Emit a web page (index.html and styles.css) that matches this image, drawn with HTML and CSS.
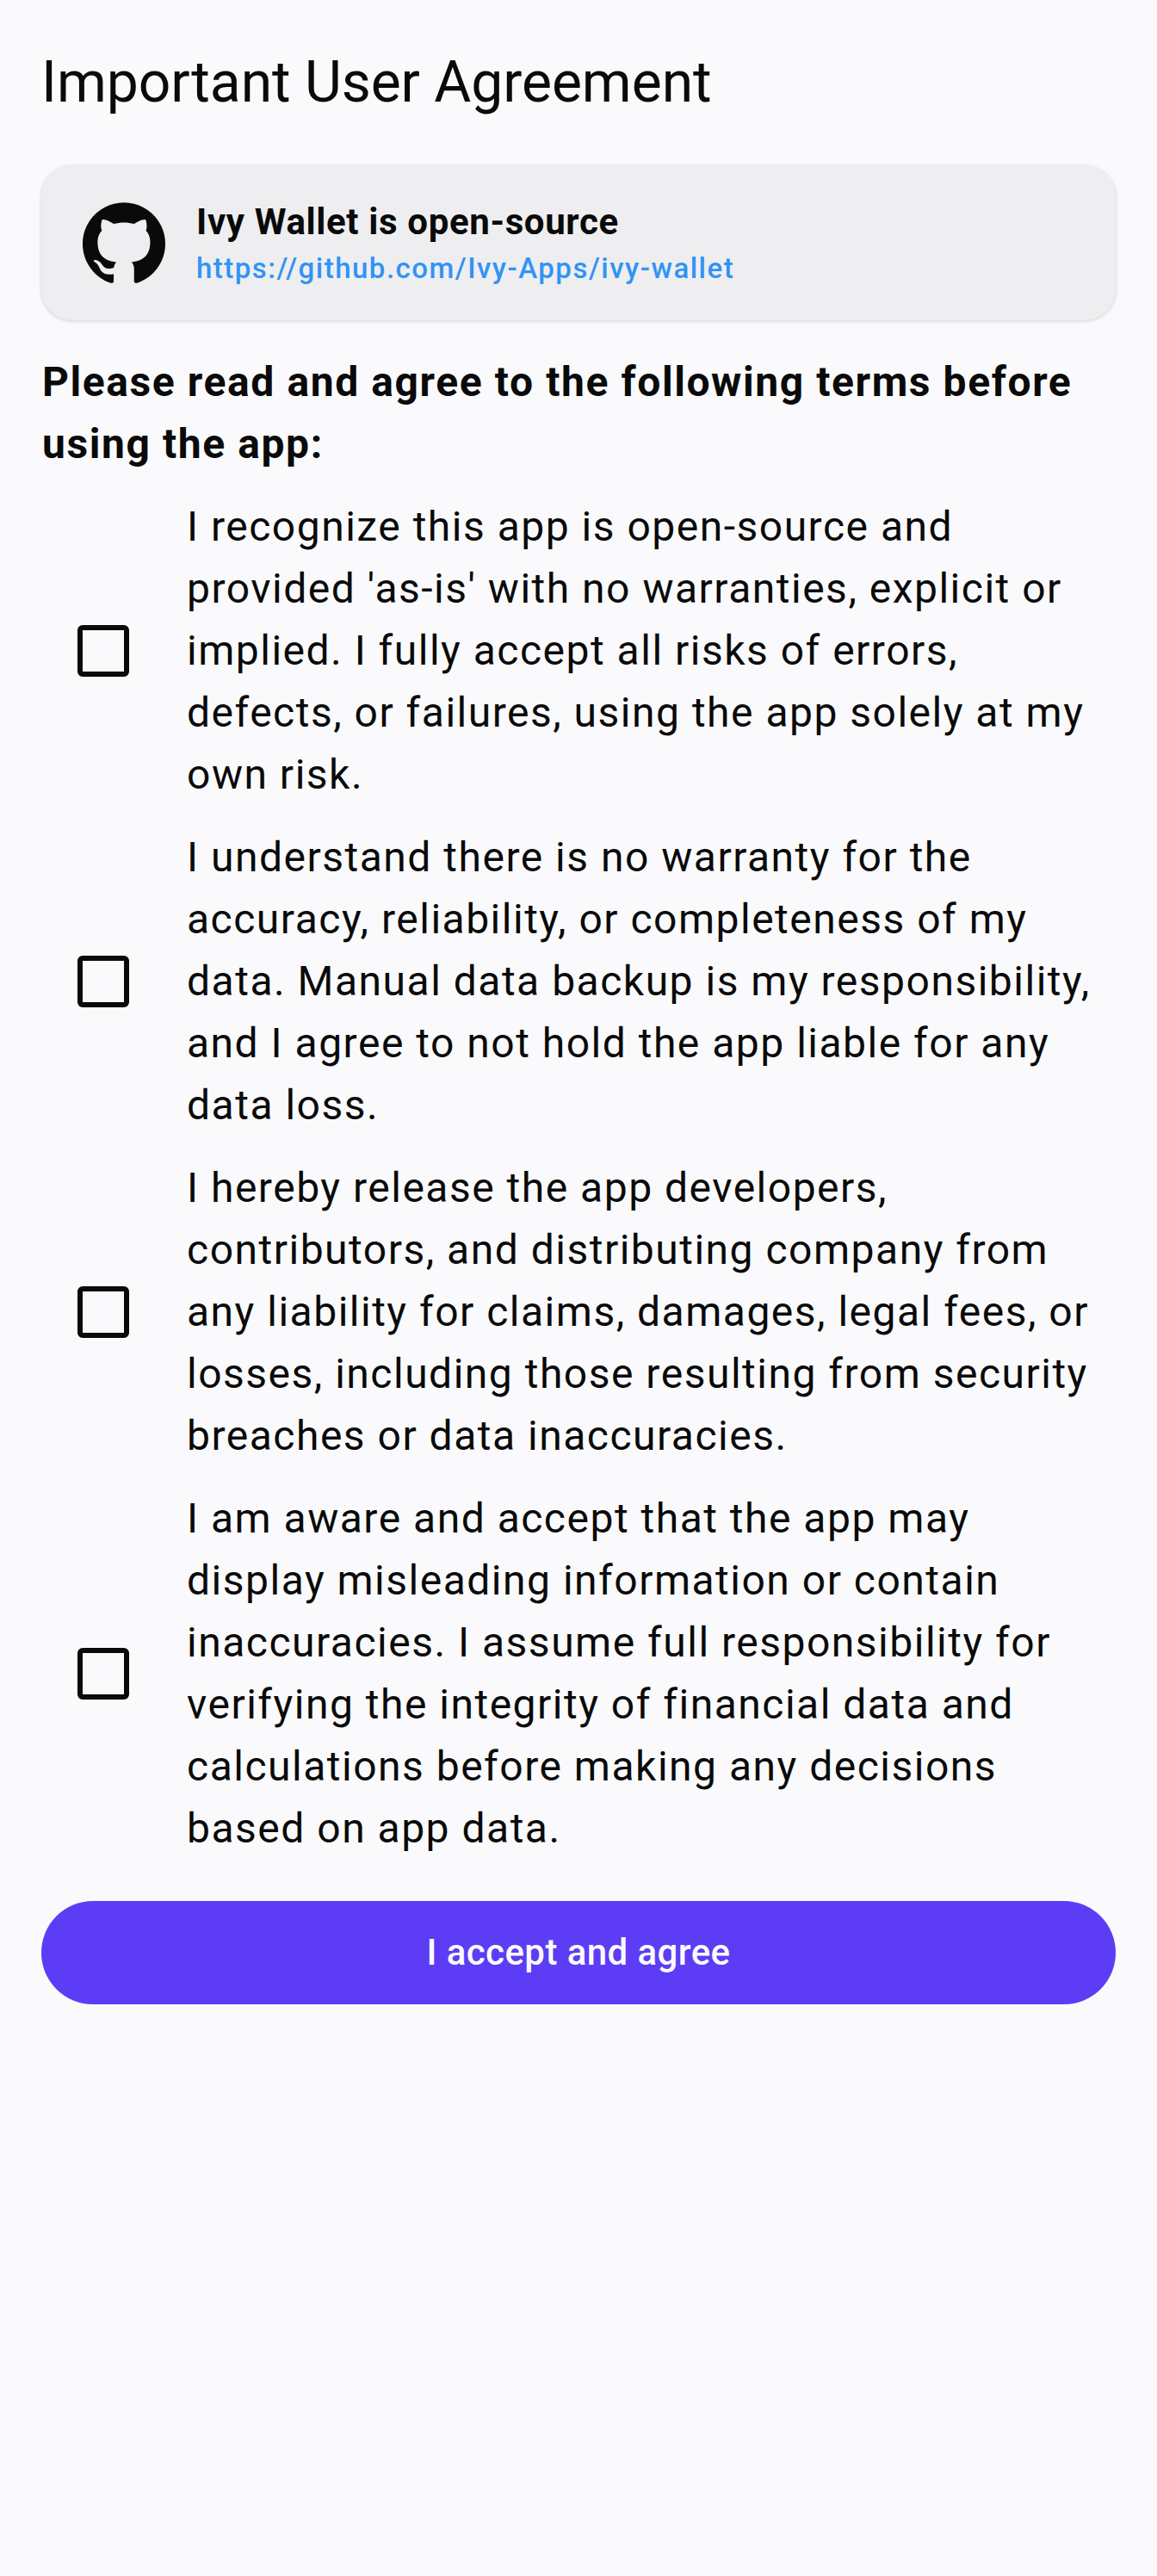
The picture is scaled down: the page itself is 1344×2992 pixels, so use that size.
FILE: index.html
```html
<!DOCTYPE html>
<html lang="en">
<head>
<meta charset="utf-8">
<title>Important User Agreement</title>
<link rel="stylesheet" href="styles.css">
</head>
<body>
<header class="app-bar"><h1 class="app-title">Important User Agreement</h1></header>
<main class="content">
  <section class="source-card">
    <svg class="source-icon" viewBox="0 0 24 24" aria-hidden="true"><path d="M12 .297c-6.63 0-12 5.373-12 12 0 5.303 3.438 9.8 8.205 11.385.6.113.82-.258.82-.577 0-.285-.01-1.04-.015-2.04-3.338.724-4.042-1.61-4.042-1.61C4.422 18.07 3.633 17.7 3.633 17.7c-1.087-.744.084-.729.084-.729 1.205.084 1.838 1.236 1.838 1.236 1.07 1.835 2.809 1.305 3.495.998.108-.776.417-1.305.76-1.605-2.665-.3-5.466-1.332-5.466-5.93 0-1.31.465-2.38 1.235-3.22-.135-.303-.54-1.523.105-3.176 0 0 1.005-.322 3.3 1.23.96-.267 1.98-.399 3-.405 1.02.006 2.04.138 3 .405 2.28-1.552 3.285-1.23 3.285-1.23.645 1.653.24 2.873.12 3.176.765.84 1.23 1.91 1.23 3.22 0 4.61-2.805 5.625-5.475 5.92.42.36.81 1.096.81 2.22 0 1.606-.015 2.896-.015 3.286 0 .315.21.69.825.57C20.565 22.092 24 17.592 24 12.297c0-6.627-5.373-12-12-12"/></svg>
    <div class="source-text">
      <h2 class="source-title">Ivy Wallet is open-source</h2>
      <a class="source-link">https://github.com/Ivy-Apps/ivy-wallet</a>
    </div>
  </section>
  <p class="intro">Please read and agree to the following terms before using the app:</p>
  <ul class="terms">
    <li class="term"><span class="checkbox" role="checkbox" aria-checked="false"></span><p class="term-text">I recognize this app is open-source and provided 'as-is' with no warranties, explicit or implied. I fully accept all risks of errors, defects, or failures, using the app solely at my own risk.</p></li>
    <li class="term"><span class="checkbox" role="checkbox" aria-checked="false"></span><p class="term-text">I understand there is no warranty for the accuracy, reliability, or completeness of my data. Manual data backup is my responsibility, and I agree to not hold the app liable for any data loss.</p></li>
    <li class="term"><span class="checkbox" role="checkbox" aria-checked="false"></span><p class="term-text">I hereby release the app developers, contributors, and distributing company from any liability for claims, damages, legal fees, or losses, including those resulting from security breaches or data inaccuracies.</p></li>
    <li class="term"><span class="checkbox" role="checkbox" aria-checked="false"></span><p class="term-text">I am aware and accept that the app may display misleading information or contain inaccuracies. I assume full responsibility for verifying the integrity of financial data and calculations before making any decisions based on app data.</p></li>
  </ul>
  <button class="accept" type="button">I accept and agree</button>
</main>
</body>
</html>
```
FILE: styles.css
```css
* { box-sizing: border-box; margin: 0; padding: 0; }

body {
  min-height: 2992px;
  background: #fafafc;
  color: #0a0a0a;
  font-family: Roboto, sans-serif;
}

.app-bar {
  display: flex;
  align-items: center;
  height: 192px;
  padding: 0 48px;
}

.app-title { font-size: 66px; line-height: 84px; font-weight: 400; letter-spacing: -0.05px; }

.content { display: flex; flex-direction: column; padding: 0 48px; }

.source-card {
  display: flex;
  align-items: center;
  gap: 36px;
  height: 180px;
  padding: 36px 48px;
  border-radius: 36px;
  background: #eeeef0;
  box-shadow: 0 1px 4px rgba(0, 0, 0, 0.17);
}

.source-icon { width: 96px; height: 96px; flex: none; fill: #0a0a0a; }
.source-text { display: flex; flex-direction: column; }
.source-title { font-size: 42px; line-height: 60px; font-weight: 700; letter-spacing: 0.64px; }
.source-link { font-size: 33px; line-height: 48px; font-weight: 500; letter-spacing: 1.5px; color: #3193f5; }

.intro {
  margin-top: 36px;
  padding-left: 1px;
  font-size: 48px;
  line-height: 72px;
  font-weight: 700;
  letter-spacing: 1.58px;
}

.terms {
  display: flex;
  flex-direction: column;
  gap: 24px;
  margin-top: 24px;
  list-style: none;
}

.term { display: flex; align-items: center; gap: 24px; }

.checkbox {
  flex: none;
  width: 60px;
  height: 60px;
  margin: 0 42px;
  border: 6px solid #0a0a0a;
  border-radius: 6px;
}

.term-text { flex: 1; padding-left: 1px; font-size: 48px; line-height: 72px; letter-spacing: 1.5px; }

.accept {
  height: 120px;
  margin-top: 48px;
  border: 0;
  border-radius: 60px;
  background: #5c3df5;
  color: #fafafc;
  font: 500 42px/60px Roboto, sans-serif;
  letter-spacing: 0.42px;
}
```
